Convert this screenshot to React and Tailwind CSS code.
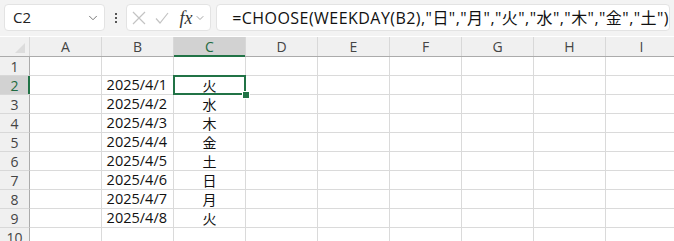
import React from 'react';
import { ChevronDown } from 'lucide-react';

const cols = ['A', 'B', 'C', 'D', 'E', 'F', 'G', 'H', 'I'];
const rows = [
  { n: 1, date: '', day: '' },
  { n: 2, date: '2025/4/1', day: '火' },
  { n: 3, date: '2025/4/2', day: '水' },
  { n: 4, date: '2025/4/3', day: '木' },
  { n: 5, date: '2025/4/4', day: '金' },
  { n: 6, date: '2025/4/5', day: '土' },
  { n: 7, date: '2025/4/6', day: '日' },
  { n: 8, date: '2025/4/7', day: '月' },
  { n: 9, date: '2025/4/8', day: '火' },
  { n: 10, date: '', day: '' },
];

const uiFont = { fontFamily: '"Open Sans", "Noto Sans CJK JP", sans-serif' };

// Formula bar row
const Toolbar = () => (
  <div className="flex items-center h-[36px] bg-[#f3f3f3] pl-[4px] pr-[4px] pb-[1px]">
    <div className="flex items-center justify-between w-[102px] h-[27px] bg-white border border-[#e3e3e3] rounded-[4px] pl-[8px] pr-[4px]">
      <span className="text-[15px] text-[#222]">C2</span>
      <ChevronDown className="w-[14px] h-[14px] text-[#666]" strokeWidth={1.5} />
    </div>
    <div className="w-[22px] flex flex-col items-center gap-[2px]">
      <span className="w-[2px] h-[2px] bg-[#555]" />
      <span className="w-[2px] h-[2px] bg-[#555]" />
      <span className="w-[2px] h-[2px] bg-[#555]" />
    </div>
    <div className="flex items-center w-[86px] h-[27px] bg-white border border-[#e3e3e3] rounded-[4px] pl-[5px]">
      <svg width="14" height="14" viewBox="0 0 14 14" className="mr-[9px]">
        <path d="M1 1 L13 13 M13 1 L1 13" stroke="#c3c3c3" strokeWidth="1.2" fill="none" />
      </svg>
      <svg width="14" height="14" viewBox="0 0 14 14" className="mr-[10px]">
        <path d="M1 7.5 L5 12 L13 2" stroke="#c3c3c3" strokeWidth="1.2" fill="none" />
      </svg>
      <span className="italic text-[18px] leading-none text-[#333]" style={{ fontFamily: '"Liberation Serif", serif' }}>
        fx
      </span>
      <ChevronDown className="w-[12px] h-[12px] text-[#888] ml-[2px]" strokeWidth={1.5} />
    </div>
    <div className="flex items-center flex-1 h-[27px] ml-[5px] bg-white border border-[#e3e3e3] rounded-[4px] pl-[15px]">
      <span className="text-[16px] tracking-[0.45px] text-[#111] whitespace-nowrap">
        =CHOOSE(WEEKDAY(B2),"日","月","火","水","木","金","土")
      </span>
    </div>
  </div>
);

export default function App() {
  return (
    <div className="w-[674px] h-[241px] overflow-hidden bg-white" style={uiFont}>
      <Toolbar />
      <div className="h-[1px] bg-white" />
      {/* column headers */}
      <div className="flex h-[20px] bg-[#f0f0f0] border-b border-[#ababab]">
        <div className="relative w-[30px] shrink-0 border-r border-[#d8d8d8]">
          <svg width="10" height="10" viewBox="0 0 10 10" className="absolute right-[4px] bottom-[3px]">
            <path d="M10 0 L10 10 L0 10 Z" fill="#dcdcdc" />
          </svg>
        </div>
        {cols.map((c) => (
          <div
            key={c}
            className={`relative w-[72px] shrink-0 flex items-center justify-center text-[14px] border-r border-[#d8d8d8] ${
              c === 'C' ? 'bg-[#d2d2d2] text-[#1e6b41]' : 'text-[#444]'
            }`}
          >
            {c}
            {c === 'C' && <span className="absolute left-0 right-0 bottom-[-1px] h-[2px] bg-[#217346]" />}
          </div>
        ))}
      </div>
      {/* rows */}
      {rows.map((r) => (
        <div key={r.n} className="flex h-[19px]">
          <div
            className={`relative w-[30px] shrink-0 flex items-center justify-center text-[14px] border-r border-b border-[#ababab] border-b-[#d8d8d8] ${
              r.n === 2 ? 'bg-[#d2d2d2] text-[#1e6b41]' : 'bg-[#f0f0f0] text-[#444]'
            }`}
          >
            {r.n}
            {r.n === 2 && <span className="absolute top-0 bottom-0 right-[-1px] w-[2px] bg-[#217346]" />}
          </div>
          {cols.map((c) => (
            <div
              key={c}
              className={`relative w-[72px] shrink-0 flex items-center text-[#111] border-r border-b border-[#dadada] ${
                c === 'B' ? 'justify-end pr-[6px] text-[14.5px]' : 'justify-center text-[14px]'
              }`}
            >
              {c === 'B' ? r.date : c === 'C' ? r.day : ''}
              {c === 'C' && r.n === 2 && (
                <>
                  <span className="absolute left-[-1px] right-[-1px] top-[-1px] bottom-[-1px] border-2 border-[#217346]" />
                  <span className="absolute right-[-5px] bottom-[-5px] w-[8px] h-[8px] bg-[#217346] border border-white z-10" />
                </>
              )}
            </div>
          ))}
        </div>
      ))}
    </div>
  );
}
